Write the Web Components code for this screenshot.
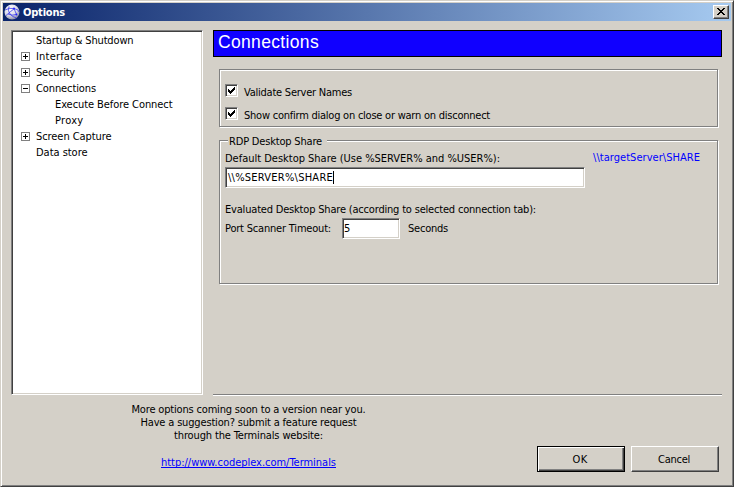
<!DOCTYPE html>
<html lang="en"><head><meta charset="utf-8"><title>Options</title>
<style>
html,body{margin:0;width:734px;height:487px;overflow:hidden;background:#d4d0c8}
body{font:11px/13px "DejaVu Sans Condensed","DejaVu Sans","Noto Sans",sans-serif;color:#000}
</style></head><body>
<options-dialog></options-dialog>
<script>
const define=(name,html,setup)=>{
  const t=document.createElement('template');t.innerHTML=html;
  customElements.define(name,class extends HTMLElement{
    connectedCallback(){
      if(this.shadowRoot)return;
      this.attachShadow({mode:'open'}).append(t.content.cloneNode(true));
      if(setup)setup(this,this.shadowRoot);
    }
  });
};
// A single-line label whose tracking is adjusted to fill the width in "w".
define('ui-text',`<style>:host{display:block;white-space:pre;flex:none}span{display:inline-block}</style><span><slot></slot></span>`,(el,r)=>{
  const w=+el.getAttribute('w'),s=r.querySelector('span'),n=el.textContent.length;
  el.style.width=w+'px';
  s.style.letterSpacing=((w-s.getBoundingClientRect().width)/n)+'px';
});
define('globe-icon',`<style>:host{display:block;width:16px;height:16px}svg{display:block}</style>
<svg width="16" height="16" viewBox="0 0 16 16"><defs><radialGradient id="g" cx=".38" cy=".28" r=".75"><stop offset="0" stop-color="#fff"/><stop offset=".6" stop-color="#dcdce8"/><stop offset="1" stop-color="#8c8ca4"/></radialGradient></defs>
<circle cx="8" cy="8" r="7.500" fill="url(#g)"/><path d="M5 2.500Q3.500 7 6 10T12.500 14M1 6Q5 3.500 10 4.500T15 8M10.500 4.500Q7 7 2 11.500M10 4.500L12.500 10.500Q8 12 4 10" fill="none" stroke="#3a3aee" stroke-width=".8"/><circle cx="10" cy="4.500" r=".9" fill="#2020ff"/><circle cx="12.500" cy="10.500" r=".9" fill="#2020ff"/></svg>`);
define('close-button',`<style>:host{display:block;box-sizing:border-box;width:16px;height:14px;background:#d4d0c8;border:1px solid;border-color:#fff #404040 #404040 #fff;box-shadow:inset -1px -1px #808080}svg{display:block}</style>
<svg width="14" height="12" shape-rendering="crispEdges"><path d="M3 2h2v1h1v1h2v-1h1v-1h2v1h-1v1h-1v1h-1v1h1v1h1v1h1v1h-2v-1h-1v-1h-2v1h-1v1h-2v-1h1v-1h1v-1h1v-1h-1v-1h-1v-1h-1z"/></svg>`);
define('title-bar',`<style>:host{display:flex;height:18px;background:linear-gradient(90deg,#0a246a,#a6caf0);color:#fff;font-weight:bold;box-sizing:border-box;padding:0 2px 0 1px}
globe-icon{margin:1px 3px 0 0}ui-text{margin:3px auto 0 0}close-button{margin-top:2px}</style><globe-icon></globe-icon><ui-text w="42">Options</ui-text><close-button></close-button>`);
define('tree-item',`<style>:host{display:flex;height:16px;padding-left:8px}:host([child]){padding-left:27px}
svg{flex:none;width:9px;height:9px;margin:4px 6px 0 0}::slotted(ui-text){margin-top:2px}.b,.v,.h{visibility:hidden}:host([open]) .b,:host([open]) .h,:host([closed]) :is(.b,.h,.v){visibility:visible}</style>
<svg shape-rendering="crispEdges"><path class="b" d="M.5.5h8v8h-8z" fill="#fff" stroke="#808080"/><path class="h" d="M2 4h5v1h-5z"/><path class="v" d="M4 2h1v5h-1z"/></svg><slot></slot>`);
define('tree-view',`<style>:host{display:block;box-sizing:border-box;width:192px;height:365px;background:#fff;border:1px solid;border-color:#808080 #fff #fff #808080;box-shadow:inset 1px 1px #404040,inset -1px -1px #d4d0c8;padding:1px}</style><slot></slot>`);
define('check-box',`<style>:host{display:flex;height:13px}i{flex:none;box-sizing:border-box;width:13px;height:13px;background:#fff;border:1px solid;border-color:#808080 #fff #fff #808080;box-shadow:inset 1px 1px #404040,inset -1px -1px #d4d0c8;margin-right:6px}svg{display:block}div{margin-top:2px}</style>
<i><svg width="11" height="11" shape-rendering="crispEdges"><path d="M2 4h1v1h1v1h1v-1h1v-1h1v-1h1v-1h1v3h-1v1h-1v1h-1v1h-1v1h-1v-1h-1v-1h-1z"/></svg></i><div><slot></slot></div>`);
define('group-box',`<style>:host{display:block;width:500px;box-sizing:border-box}
fieldset{box-sizing:border-box;width:499px;height:calc(100% - 1px);margin:0;padding:0;border:1px solid #808080;box-shadow:1px 1px #fff,inset 1px 1px #fff}
:host([titled]) fieldset{border:0;box-shadow:none;width:500px;height:100%;display:grid;grid-template:5px 1fr/100%}
.frame{display:none}:host([titled]) .frame{display:block;grid-area:2/1;width:499px;margin-bottom:1px;box-sizing:border-box;border:1px solid #808080;box-shadow:1px 1px #fff,inset 1px 1px #fff}
.cap{grid-area:1/1;z-index:1;display:none;width:98px;height:13px;background:#d4d0c8;margin-left:9px;padding-left:1px}:host([titled]) .cap{display:block}.body{grid-area:2/1}</style>
<fieldset><div class="cap"><slot name="caption"></slot></div><div class="frame"></div><div class="body"><slot></slot></div></fieldset>`);
define('text-field',`<style>:host{display:flex;box-sizing:border-box;height:21px;background:#fff;border:1px solid;border-color:#808080 #fff #fff #808080;box-shadow:inset 1px 1px #404040,inset -1px -1px #d4d0c8;padding:3px 0 0 2px}i{display:none;width:1px;height:13px;background:#000}:host([focused]) i{display:block}</style><slot></slot><i></i>`);
define('push-button',`<style>:host{display:flex;justify-content:center;box-sizing:border-box;width:88px;height:26px;padding:6px 2px 0 0;border:1px solid;border-color:#fff #404040 #404040 #fff;box-shadow:inset -1px -1px #808080}
:host([default]){border-color:#000;box-shadow:inset 1px 1px #fff,inset -1px -1px #404040,inset -2px -2px #808080}</style><slot></slot>`);
define('options-page',`<style>:host{display:block;box-sizing:border-box;width:509px;height:366px;border-bottom:1px solid #fff;box-shadow:inset 0 -1px #808080}
.head{box-sizing:border-box;height:27px;background:#1000ff;border:1px solid #000;color:#fff;font:17.5px/20px "Liberation Sans",Arial,sans-serif;padding:1px 0 0 4px}
group-box{margin-left:6px}.one{margin-top:12px;height:59px}.two{margin-top:12px;margin-top:7px;height:150px}
.checks{display:grid;gap:10px;padding:14px 0 0 5px}
.cols{display:flex;padding:12px 0 0 6px}.main{width:360px}.target{color:#00f;margin:-1px 0 0 8px}.main text-field{margin-top:2px}.eval{margin-top:15px}.row{display:flex;margin-top:2px}.row>ui-text{margin-top:4px}.row text-field{width:58px;margin:0 8px 0 11px;padding-left:1px}</style>
<div class="head"><ui-text w="101">Connections</ui-text></div>
<group-box class="one"><div class="checks"><check-box><ui-text w="108">Validate Server Names</ui-text></check-box><check-box><ui-text w="246">Show confirm dialog on close or warn on disconnect</ui-text></check-box></div></group-box>
<group-box class="two" titled><ui-text slot="caption" w="93">RDP Desktop Share</ui-text>
<div class="cols"><div class="main"><ui-text w="275">Default Desktop Share (Use %SERVER% and %USER%):</ui-text><text-field focused><ui-text w="105">\\\\%SERVER%\\SHARE</ui-text></text-field>
<ui-text class="eval" w="311">Evaluated Desktop Share (according to selected connection tab):</ui-text>
<div class="row"><ui-text w="106">Port Scanner Timeout:</ui-text><text-field><ui-text w="7">5</ui-text></text-field><ui-text w="40">Seconds</ui-text></div></div><ui-text class="target" w="107">\\\\targetServer\\SHARE</ui-text></div></group-box>`);
define('options-dialog',`<style>:host{display:block;box-sizing:border-box;width:734px;height:487px;background:#d4d0c8;border:1px solid;border-color:#d4d0c8 #404040 #404040 #d4d0c8;box-shadow:inset 1px 1px #fff,inset -1px -1px #808080;padding:2px}
.top{display:flex;gap:10px;padding:9px 0 0 8px}.foot{display:flex;justify-content:space-between;padding:7px 12px 0 128px}.msg{display:flex;flex-direction:column;align-items:center;width:235px}
.link{margin-top:14px;color:#00f;border-bottom:1px solid #00f;height:11px}.buttons{display:flex;gap:6px;margin-top:43px}</style>
<title-bar></title-bar>
<div class="top"><tree-view>
<tree-item><ui-text w="97.500">Startup &amp; Shutdown</ui-text></tree-item>
<tree-item closed><ui-text w="46">Interface</ui-text></tree-item>
<tree-item closed><ui-text w="39">Security</ui-text></tree-item>
<tree-item open><ui-text w="60">Connections</ui-text></tree-item>
<tree-item child><ui-text w="117.500">Execute Before Connect</ui-text></tree-item>
<tree-item child><ui-text w="28.500">Proxy</ui-text></tree-item>
<tree-item closed><ui-text w="75.500">Screen Capture</ui-text></tree-item>
<tree-item><ui-text w="51.500">Data store</ui-text></tree-item>
</tree-view><options-page></options-page></div>
<div class="foot"><div class="msg"><ui-text w="234">More options coming soon to a version near you.</ui-text><ui-text w="216">Have a suggestion? submit a feature request</ui-text><ui-text w="149">through the Terminals website:</ui-text><ui-text class="link" w="175">http://www.codeplex.com/Terminals</ui-text></div>
<div class="buttons"><push-button default><ui-text w="15">OK</ui-text></push-button><push-button><ui-text w="32">Cancel</ui-text></push-button></div></div>`);
</script></body></html>
